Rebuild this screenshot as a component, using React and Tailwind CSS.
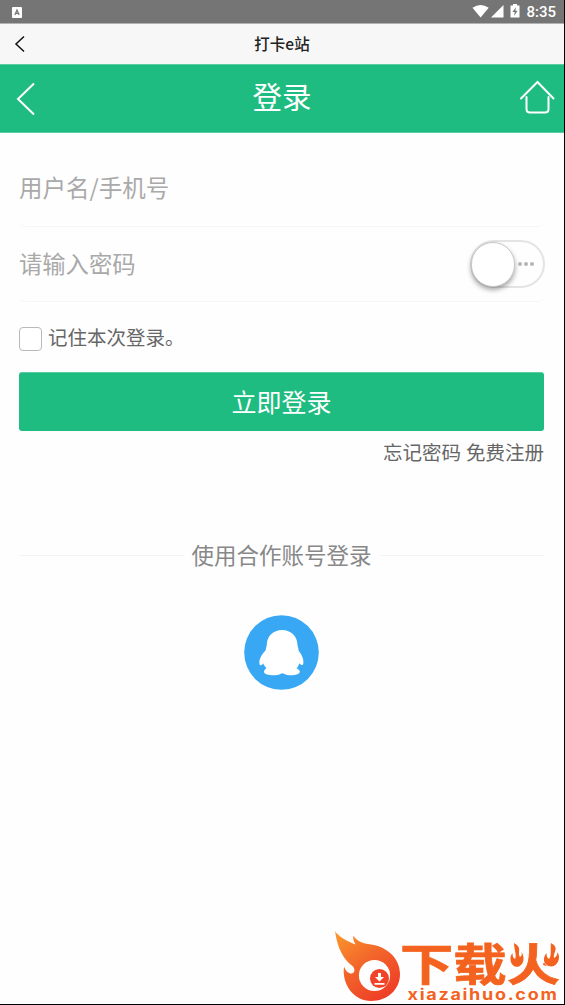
import { useState } from "react";

function StatusBar() {
  return (
    <div className="h-6 shrink-0 bg-[#757575] border-b border-[#b2b2b2] flex items-center justify-between pl-3 pr-[8px] text-white">
      <svg className="w-[10px] h-[11px] mt-px" viewBox="0 0 10 11">
        <rect width="10" height="11" rx="1" fill="#fff" />
        <path d="M2.8 8 5 3l2.2 5M3.6 6.4h2.8" fill="none" stroke="#757575" strokeWidth="1.2" />
      </svg>
      <div className="flex items-center">
        <svg className="w-[50px] h-[14px] mb-px" viewBox="0 0 50 14">
          <path d="M.5 3.7Q8.5-1.5 16.7 3.7L8.6 13.6Z" fill="#fff" />
          <path d="M31.5 1v12.5H19Z" fill="#fff" />
          <path d="M41 0h4v1.5h2.5V13.5h-9V1.5H41Z" fill="#fff" />
          <path d="m44 3-3.5 5h2.3l-.8 4 3.6-5.2h-2.3Z" fill="#757575" />
        </svg>
        <span className="ml-[4px] pt-[2px] text-[15px] leading-none font-medium font-[Roboto,sans-serif]">8:35</span>
      </div>
    </div>
  );
}

function PenguinIcon() {
  return (
    <svg className="w-[75px] h-[75px]" viewBox="0 0 75 75">
      <circle cx="37.5" cy="37.5" r="37.3" fill="#38a8f5" />
      <path
        d="M38.2 15C47 15 53.5 21.5 53.5 30L54.8 36C58.5 40.5 60 45 59.3 48.5C58.6 51 57 50 55.3 48.2C54.8 50 54 51.8 52.5 53.3C54.6 54.3 56 55.5 55.8 57C55.3 59.7 49.5 60.6 45.5 60.2C42.5 60 40.5 59 38.3 58.2C36.5 59 34.5 60 31 60.2C26.5 60.6 20.5 59.7 20 57C20 55 21 54 22.5 53.2C21 51.7 19.7 50 19.1 48.2C17.8 50.5 16 51 15.5 49C14.8 45 17 40 21.5 35.5L22.8 30C22.8 21.5 29 15 38.2 15Z"
        fill="#fff"
      />
    </svg>
  );
}

function Watermark() {
  return (
    <svg className="absolute left-[333px] top-[929px] w-[231px] h-[75px] overflow-visible" viewBox="0 0 231 75">
      <defs>
        <linearGradient id="flame" x1="0" y1="0" x2=".65" y2="1">
          <stop offset="0" stopColor="#fb9a2c" />
          <stop offset=".55" stopColor="#f2622a" />
          <stop offset="1" stopColor="#ee3f27" />
        </linearGradient>
      </defs>
      <path
        d="M2 2C5 7 14 12.5 22.5 15.5C21 12.5 19.5 10 20.5 6.5C23 12 30 14.5 38 15.5C55 18 67 30 67 45C67 61 54 72 38 72C21.5 72 8.5 56 11 37.5C13 42.5 15.5 44.5 18.5 44.5C21.5 44 22.5 41 20 37.5C11 31 4.5 20 2 2Z"
        fill="url(#flame)"
      />
      <circle cx="41.5" cy="46.5" r="15.6" fill="#fff" />
      <circle cx="46.5" cy="49.5" r="9.5" fill="#f04428" />
      <path d="M45 44h3v4h3l-4.5 4.5L42 48h3ZM41.5 54h10v1.8h-10Z" fill="#fff" />
      <text
        x="67"
        y="53"
        transform="translate(0 6) scale(1 .86)"
        textLength="160"
        lengthAdjust="spacingAndGlyphs"
        className="font-['Noto_Sans_CJK_SC',sans-serif] font-bold text-[52px]"
        stroke="#f3631f"
        strokeWidth=".8"
        fill="#f3631f"
      >
        下载火
      </text>
      {/* flames stand in for the two side strokes of the last character */}
      <path d="M175 17h15.500v21h-12l-3.500-2ZM210 13h18v27h-12l-6-8Z" fill="#fff" />
      <path
        d="M181 14C190 19 184 23 187 28C189 27 189 25 188.500 23C192 28 191 35 186 37.500C181 39 178 35 177.500 31C177 28 178 26 179.500 24C179.500 27 180 29 182 30C184 26 181 21 181 14ZM218 14C227 19 220 23 221 29C223 28 224.500 26 224.500 23C227.500 28 226 34 221 37C216 38.500 211.500 35.500 211 31.500C210.500 28 212 26 213.500 24C213.500 27 214 29 216 30C219 26 217 21 218 14Z"
        fill="#f3631f"
      />
      <text
        x="74.500"
        y="70.500"
        textLength="151"
        lengthAdjust="spacingAndGlyphs"
        className="font-[Inter,sans-serif] font-bold text-[15.5px] tracking-[1.5px]"
        fill="#f3631f"
      >
        xiazaihuo.com
      </text>
    </svg>
  );
}

export default function LoginPage() {
  const [remember, setRemember] = useState(false);
  const [showPassword, setShowPassword] = useState(false);

  return (
    <div className="relative w-[565px] h-[1005px] overflow-hidden flex flex-col bg-[#fefefe] border-r border-b border-black font-['Noto_Sans_CJK_SC',sans-serif]">
      <StatusBar />
      <div className="h-10 shrink-0 bg-[#f7f7f7] grid grid-cols-3 items-center">
        <svg className="ml-[14px] mb-px w-3 h-[18px]" viewBox="0 0 12 18">
          <path d="M10 1.5 2 9l8 7.5" fill="none" stroke="#111" strokeWidth="1.5" />
        </svg>
        <h1 className="text-center text-[15.5px] leading-none font-medium text-[#222]">打卡e站</h1>
      </div>
      <div className="h-[69px] shrink-0 bg-[#1ebc81] border-y border-[#59cea2] grid grid-cols-3 items-center">
        <svg className="ml-4 w-5 h-[34px]" viewBox="0 0 20 34">
          <path d="M18 1.5 2 17l16 15.5" fill="none" stroke="#fff" strokeWidth="2" />
        </svg>
        <h2 className="text-center text-[29.5px] leading-none text-white pb-[5px]">登录</h2>
        <svg className="ml-auto mr-[9px] mb-1 w-[36px] h-[34px]" viewBox="0 0 36 34">
          <path
            d="M2 18.5 18.500 2l16 16.5M7.500 17v12q0 3.5 3.5 3.5h15q3.5 0 3.5-3.5V17"
            fill="none"
            stroke="#fff"
            strokeWidth="2"
            strokeLinecap="round"
          />
        </svg>
      </div>

      <form className="pl-[19px] pr-[20px] pt-[19px] text-[#666]" onSubmit={(e) => e.preventDefault()}>
        <div className="h-[75px] flex items-center border-b border-[#f5f5f5] rounded-md">
          <input
            className="w-full pb-1 text-[23.5px] leading-[34px] outline-none placeholder:text-[#a9a9a9]"
            name="username"
            placeholder="用户名/手机号"
            type="text"
          />
        </div>
        <div className="h-[75px] flex items-center border-b border-[#f5f5f5] rounded-md">
          <input
            className="grow min-w-0 pb-[3px] text-[23.3px] leading-[34px] outline-none placeholder:text-[#a9a9a9]"
            name="password"
            placeholder="请输入密码"
            type={showPassword ? "text" : "password"}
          />
          <button
            type="button"
            onClick={() => setShowPassword(!showPassword)}
            className="w-[75px] h-12 -mr-px shrink-0 rounded-full border-[2.5px] border-[#e4e4e4] flex items-center"
          >
            <span className="-ml-[1px] w-[44px] h-[45px] shrink-0 rounded-full bg-white border border-[#c8c8c8] shadow-[0_3px_5px_rgba(0,0,0,0.35)]"></span>
            <span className="ml-[3px] flex gap-[2px]">
              <i className="size-1 rounded-full bg-[#b5b5b5]"></i>
              <i className="size-1 rounded-full bg-[#b5b5b5]"></i>
              <i className="size-1 rounded-full bg-[#b5b5b5]"></i>
            </span>
          </button>
        </div>
        <label className="mt-[25px] h-6 flex items-center text-[19.5px] leading-6">
          <input
            type="checkbox"
            checked={remember}
            onChange={(e) => setRemember(e.target.checked)}
            className="appearance-none w-[23px] h-6 mr-[6px] rounded-[4px] bg-white border border-[#b9b9b9] checked:bg-[#1ebc81]"
          />
          <span className="pb-[5px]">记住本次登录。</span>
        </label>
        <button className="mt-[21px] w-full h-[59px] pb-px rounded-[3px] bg-[#1ebc81] border-t border-[#59cea2] text-white text-[25px] leading-none">
          立即登录
        </button>
        <div className="mt-[9px] flex justify-end gap-[5px] text-[19.5px] leading-6">
          <a href="#">忘记密码</a>
          <a href="#">免费注册</a>
        </div>
      </form>

      <div className="mt-[75px] ml-[19px] mr-[20px] h-8 flex items-center gap-2 text-[22.5px] leading-8 text-[#888]">
        <div className="grow h-px bg-[#f3f3f3]"></div>
        <span className="pb-[3px]">使用合作账号登录</span>
        <div className="grow h-px bg-[#f3f3f3]"></div>
      </div>
      <a href="#" className="mt-[44px] mr-px self-center">
        <PenguinIcon />
      </a>
      <Watermark />
    </div>
  );
}
